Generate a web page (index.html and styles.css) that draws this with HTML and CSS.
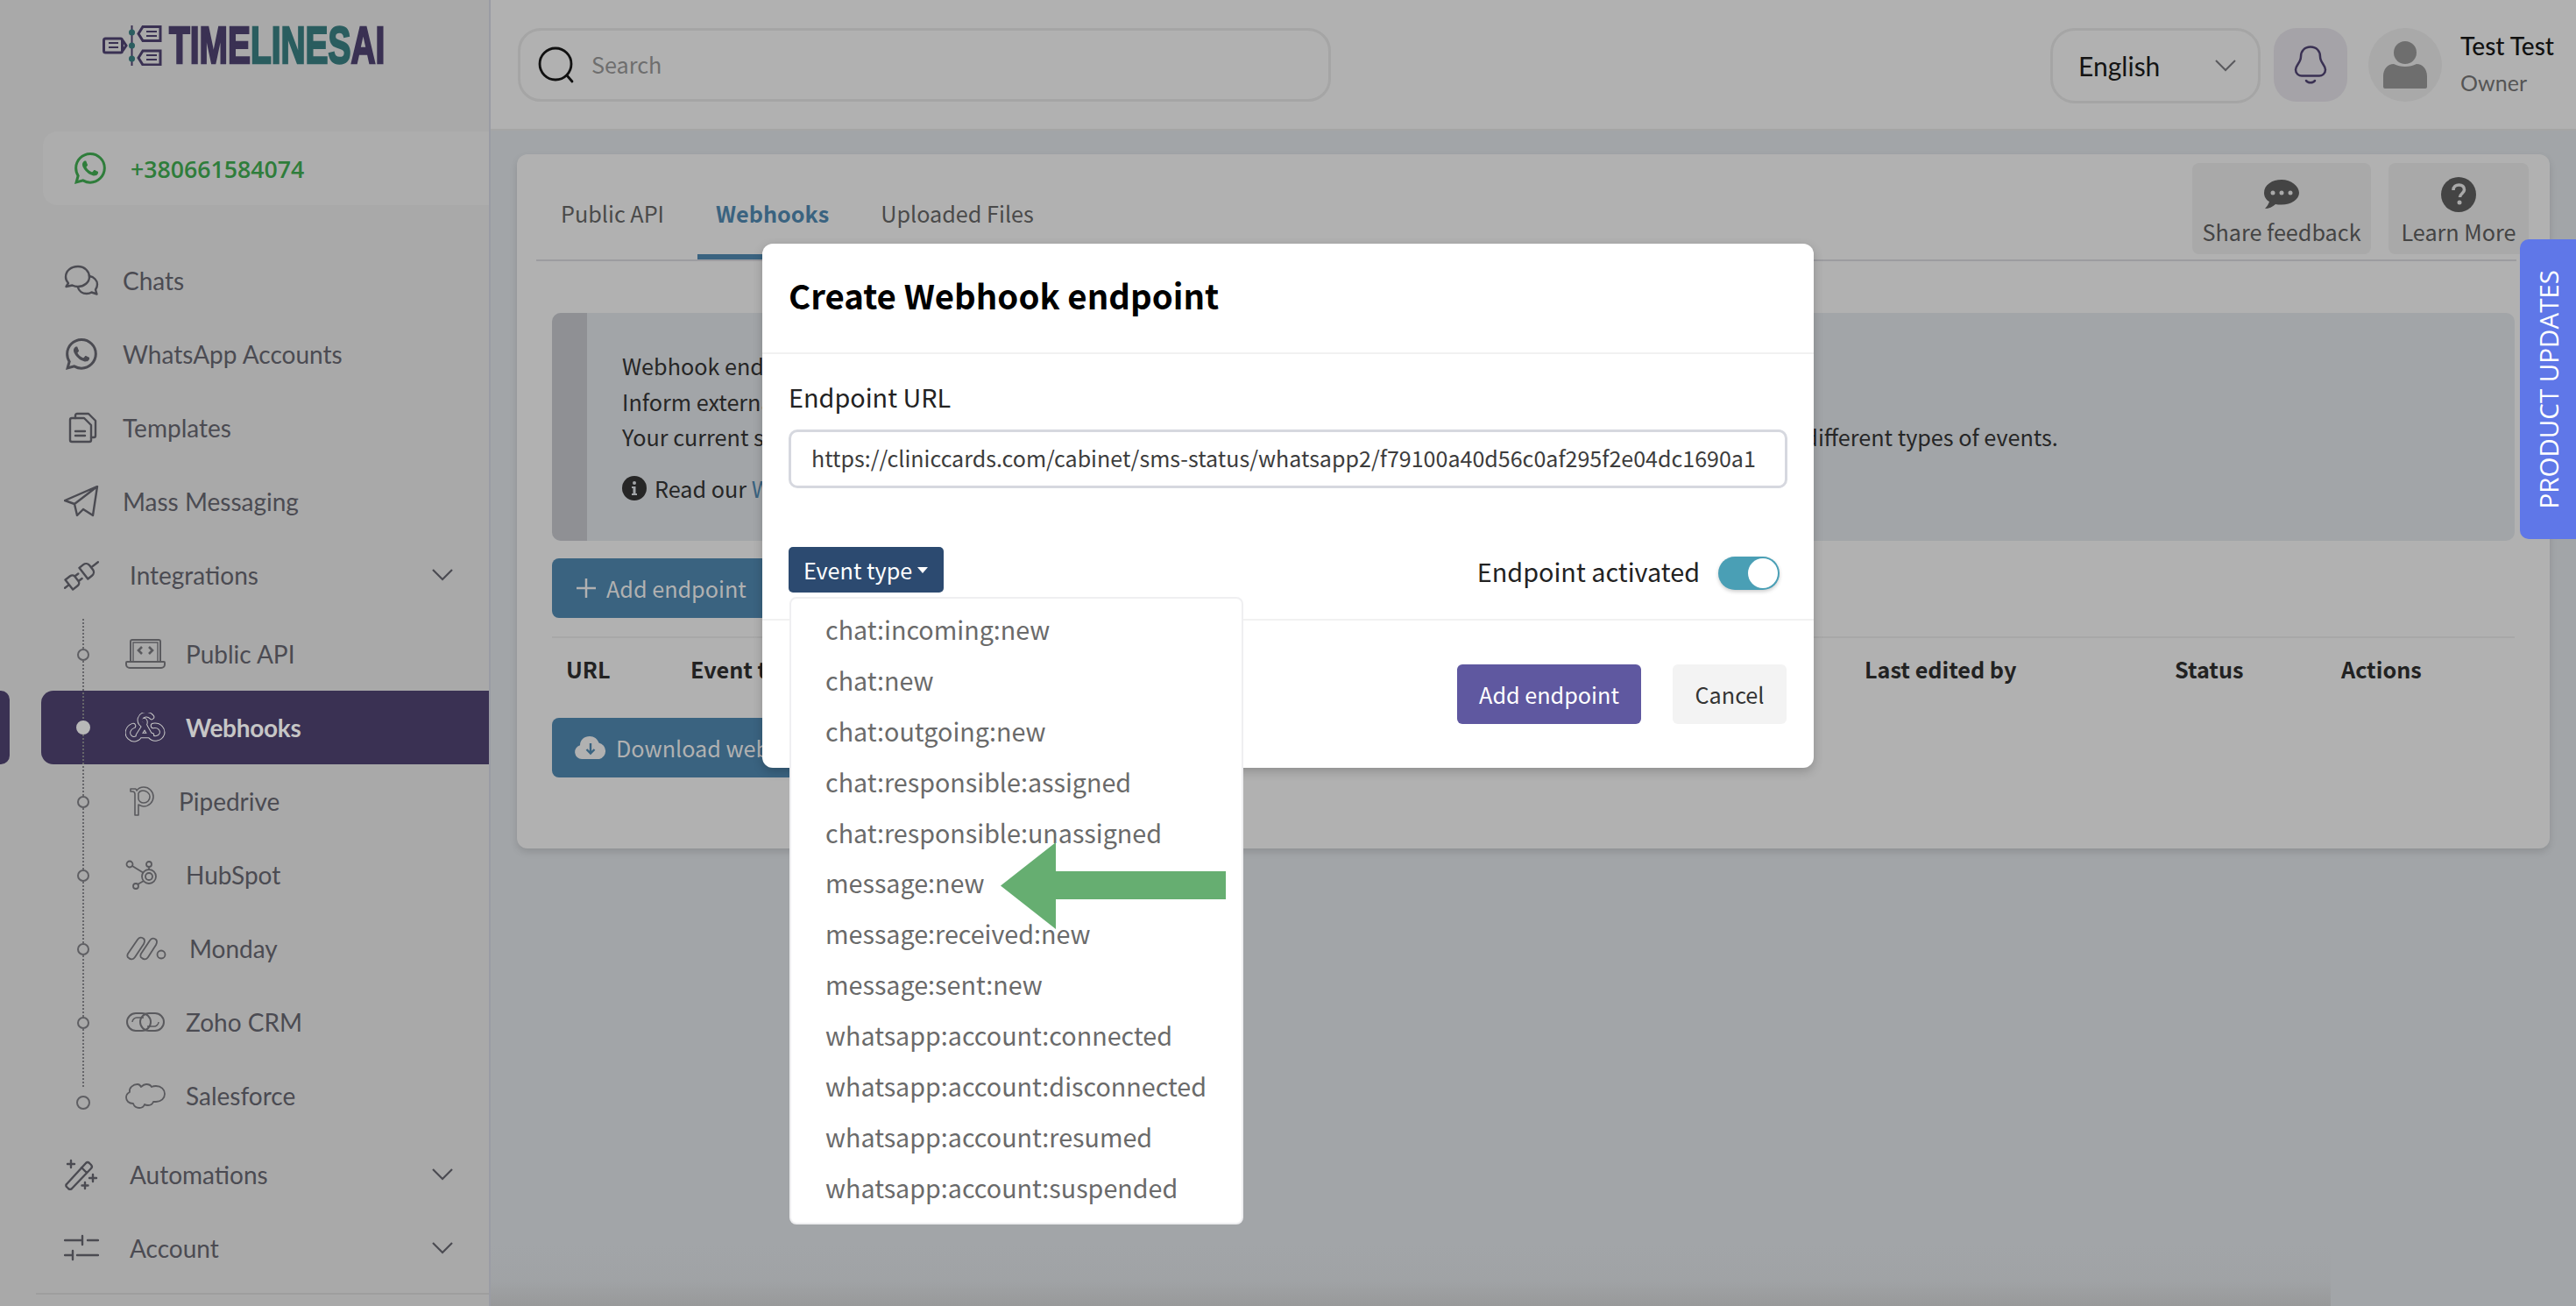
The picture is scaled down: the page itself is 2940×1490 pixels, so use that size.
FILE: index.html
```html
<!DOCTYPE html>
<html lang="en">
<head>
<meta charset="utf-8">
<title>Webhooks</title>
<link rel="stylesheet" href="styles.css">
</head>
<body>
<div class="app">
  <aside class="sidebar">
    <div class="logo">
      <svg class="logo-mark" viewBox="0 0 68 46" width="68" height="46" fill="none">
        <rect x="1.5" y="15" width="21" height="16" rx="2" stroke="#3a3153" stroke-width="3"/>
        <path d="M23 17l4 6-4 6" stroke="#3a3153" stroke-width="3"/>
        <path d="M7 20h11M7 25h11" stroke="#3a3153" stroke-width="2"/>
        <path d="M33.500 0v46" stroke="#3a3153" stroke-width="2"/>
        <circle cx="33.500" cy="8" r="3.500" fill="#2a5d5f"/><circle cx="33.500" cy="23" r="3.500" fill="#2a5d5f"/><circle cx="33.500" cy="38" r="3.500" fill="#2a5d5f"/>
        <path d="M46 1.500h20v16H46l-5-8z" stroke="#3a3153" stroke-width="3"/>
        <path d="M50 7h12M50 12h12" stroke="#3a3153" stroke-width="2"/>
        <path d="M46 29h20v16H46l-5-8z" stroke="#3a3153" stroke-width="3"/>
        <path d="M50 34h12M50 39h12" stroke="#3a3153" stroke-width="2"/>
      </svg>
      <span class="logo-text"><span>TIME</span><span class="logo-teal">LINES</span><span>AI</span></span>
    </div>
    <div class="phone">
      <svg class="wa" viewBox="0 0 16 16" width="36" height="36"><path fill="#2f7d3b" d="M13.601 2.326A7.854 7.854 0 0 0 7.994 0C3.627 0 .068 3.558.064 7.926c0 1.399.366 2.76 1.057 3.965L0 16l4.204-1.102a7.933 7.933 0 0 0 3.79.965h.004c4.368 0 7.926-3.558 7.93-7.93A7.898 7.898 0 0 0 13.6 2.326zM7.994 14.521a6.573 6.573 0 0 1-3.356-.92l-.24-.144-2.494.654.666-2.433-.156-.251a6.56 6.56 0 0 1-1.007-3.505c0-3.626 2.957-6.584 6.591-6.584a6.56 6.56 0 0 1 4.66 1.931 6.557 6.557 0 0 1 1.928 4.66c-.004 3.639-2.961 6.592-6.592 6.592zm3.615-4.934c-.197-.099-1.17-.578-1.353-.646-.182-.065-.315-.099-.445.099-.133.197-.513.646-.627.775-.114.133-.232.148-.43.05-.197-.1-.836-.308-1.592-.985-.59-.525-.985-1.175-1.103-1.372-.114-.198-.011-.304.088-.403.087-.088.197-.232.296-.346.1-.114.133-.198.198-.33.065-.134.034-.248-.015-.347-.05-.099-.445-1.076-.612-1.47-.16-.389-.323-.335-.445-.34-.114-.007-.247-.007-.38-.007a.729.729 0 0 0-.529.247c-.182.198-.691.677-.691 1.654 0 .977.71 1.916.81 2.049.098.133 1.394 2.132 3.383 2.992.47.205.84.326 1.129.418.475.152.904.129 1.246.08.38-.058 1.171-.48 1.338-.943.164-.464.164-.86.114-.943-.049-.084-.182-.133-.38-.232z"/></svg>
      <span>+380661584074</span>
    </div>
    <nav class="nav">
      <a class="item">
        <svg class="ico" viewBox="0 0 40 36" fill="none" stroke="#4b4b52" stroke-width="2.400" stroke-linejoin="round" stroke-linecap="round"><path d="M16 2C8 2 2 7 2 14c0 3 1 5 3 7l-2.500 4 7-1.500c2 1 4 1.500 6.500 1.500 7 0 13-5 13-11S24 2 16 2z"/><path d="M29 13c5 1 9 4.500 9 9.500 0 2.500-1 4.500-2 6l1.500 5-6-2c-1.500 1-3.500 1.500-5.500 1.500-5 0-9-3-10-7"/></svg>
        <span>Chats</span>
      </a>
      <a class="item">
        <svg class="ico" viewBox="0 0 16 16"><path fill="#4b4b52" d="M13.601 2.326A7.854 7.854 0 0 0 7.994 0C3.627 0 .068 3.558.064 7.926c0 1.399.366 2.76 1.057 3.965L0 16l4.204-1.102a7.933 7.933 0 0 0 3.79.965h.004c4.368 0 7.926-3.558 7.93-7.93A7.898 7.898 0 0 0 13.6 2.326zM7.994 14.521a6.573 6.573 0 0 1-3.356-.92l-.24-.144-2.494.654.666-2.433-.156-.251a6.56 6.56 0 0 1-1.007-3.505c0-3.626 2.957-6.584 6.591-6.584a6.56 6.56 0 0 1 4.66 1.931 6.557 6.557 0 0 1 1.928 4.66c-.004 3.639-2.961 6.592-6.592 6.592zm3.615-4.934c-.197-.099-1.17-.578-1.353-.646-.182-.065-.315-.099-.445.099-.133.197-.513.646-.627.775-.114.133-.232.148-.43.05-.197-.1-.836-.308-1.592-.985-.59-.525-.985-1.175-1.103-1.372-.114-.198-.011-.304.088-.403.087-.088.197-.232.296-.346.1-.114.133-.198.198-.33.065-.134.034-.248-.015-.347-.05-.099-.445-1.076-.612-1.47-.16-.389-.323-.335-.445-.34-.114-.007-.247-.007-.38-.007a.729.729 0 0 0-.529.247c-.182.198-.691.677-.691 1.654 0 .977.71 1.916.81 2.049.098.133 1.394 2.132 3.383 2.992.47.205.84.326 1.129.418.475.152.904.129 1.246.08.38-.058 1.171-.48 1.338-.943.164-.464.164-.86.114-.943-.049-.084-.182-.133-.38-.232z"/></svg>
        <span>WhatsApp Accounts</span>
      </a>
      <a class="item">
        <svg class="ico" viewBox="0 0 40 36" fill="none" stroke="#4b4b52" stroke-width="2.400" stroke-linejoin="round" stroke-linecap="round"><path d="M9 7h14l8 8v17a2 2 0 0 1-2 2H9a2 2 0 0 1-2-2V9a2 2 0 0 1 2-2z"/><path d="M13 7V4a2 2 0 0 1 2-2h13l8 8v17a2 2 0 0 1-2 2h-3"/><path d="M13 22h11M13 27h11"/></svg>
        <span>Templates</span>
      </a>
      <a class="item">
        <svg class="ico" viewBox="0 0 40 36" fill="none" stroke="#4b4b52" stroke-width="2.400" stroke-linejoin="round" stroke-linecap="round"><path d="M1 17L38 1l-5 33-11-7-7 7-3-13zM38 1L12 21M15 34l7-7"/></svg>
        <span>Mass Messaging</span>
      </a>
      <a class="item item-group">
        <svg class="ico" viewBox="0 0 40 36" fill="none" stroke="#4b4b52" stroke-width="2.400" stroke-linejoin="round" stroke-linecap="round"><g transform="translate(20 18) rotate(-38)"><path d="M-24 0h6M-18-7h7a4 4 0 0 1 4 4v6a4 4 0 0 1-4 4h-7zM-7-3.500h5M-7 3.500h5M3-8v16M3-8h6a5 5 0 0 1 5 5v6a5 5 0 0 1-5 5H3M14 0h10"/></g></svg>
        <span class="group-label">Integrations</span>
        <svg class="chev" viewBox="0 0 24 14" fill="none" stroke="#4b4b52" stroke-width="2.200"><path d="M1 1l11 11L23 1"/></svg>
      </a>
      <div class="subnav">
        <a class="sub"><i class="dot"></i>
          <svg class="sub-ico" viewBox="0 0 46 34" fill="none" stroke="#5a5a5e" stroke-width="2"><path d="M6 26V3a2 2 0 0 1 2-2h30a2 2 0 0 1 2 2v23"/><path d="M9 26V4h28v22" stroke-width="1.400"/><path d="M2 26h42a1 1 0 0 1 1 1v2a4 4 0 0 1-4 4H5a4 4 0 0 1-4-4v-2a1 1 0 0 1 1-1z"/><path d="M19 9l-4 4 4 4M27 9l4 4-4 4" stroke-width="2.600"/></svg>
          <span>Public API</span></a>
        <a class="sub active"><i class="dot"></i>
          <svg class="sub-ico" viewBox="0 0 46 34" fill="none"><g stroke="#c6c6c6" stroke-width="6.500" stroke-linecap="round" stroke-linejoin="round"><path d="M30 5c-3-4-11-4-13 2-1 4 2 7 5 8l-7 11"/><path d="M9 15c-6 2-8 9-4 13 4 4 10 2 11-2h14"/><path d="M21 9c2 0 2 4 0 4l8 14c3 4 11 3 13-3 1-5-3-10-10-9"/></g><g stroke="#3a3153" stroke-width="4.500" stroke-linecap="round" stroke-linejoin="round"><path d="M30 5c-3-4-11-4-13 2-1 4 2 7 5 8l-7 11"/><path d="M9 15c-6 2-8 9-4 13 4 4 10 2 11-2h14"/><path d="M21 9c2 0 2 4 0 4l8 14c3 4 11 3 13-3 1-5-3-10-10-9"/></g></svg>
          <span>Webhooks</span></a>
        <a class="sub sub-pipe"><i class="dot"></i>
          <svg class="sub-ico pipe-ico" viewBox="0 0 28 34" fill="none" stroke="#5a5a5e" stroke-width="1.600" stroke-linejoin="round"><path d="M1 3h6l1 2c2-3 5-4 8-4 6 0 11 5 11 11s-5 11-11 11c-2 0-4-1-6-2v12H6V9c0-2-1-3-3-3H1z"/><path d="M10 8c1-2 3-3 5-3 4 0 8 3 8 7s-3 7-7 7c-3 0-6-2-6-5z"/></svg>
          <span>Pipedrive</span></a>
        <a class="sub"><i class="dot"></i>
          <svg class="sub-ico" viewBox="0 0 46 34" fill="none" stroke="#5a5a5e" stroke-width="1.800"><circle cx="5" cy="5" r="3.500"/><circle cx="27" cy="5" r="3"/><circle cx="27" cy="19" r="8"/><circle cx="27" cy="19" r="4"/><circle cx="12" cy="30" r="3"/><path d="M8 7l13 8M27 8v3M14 28l7-4"/></svg>
          <span>HubSpot</span></a>
        <a class="sub sub-mon"><i class="dot"></i>
          <svg class="sub-ico mon-ico" viewBox="0 0 48 28" fill="none" stroke="#5a5a5e" stroke-width="1.800"><path d="M3 20L14 4c2-3 5-3 7-1s1 4 0 6L11 24c-2 3-5 3-7 1-2-1-2-3-1-5z"/><path d="M18 20L28 5c2-3 5-3 7-1s1 4 0 6L26 24c-2 3-5 3-7 1-2-1-2-3-1-5z"/><circle cx="41" cy="21" r="4.500"/></svg>
          <span>Monday</span></a>
        <a class="sub"><i class="dot"></i>
          <svg class="sub-ico" viewBox="0 0 46 26" fill="none" stroke="#5a5a5e" stroke-width="2"><rect x="2" y="3" width="27" height="20" rx="10"/><rect x="17" y="3" width="27" height="20" rx="10"/><path d="M8 13c0-3 3-5 5-5h8M38 13c0 3-3 5-5 5h-8" stroke-width="1.500"/></svg>
          <span>Zoho CRM</span></a>
        <a class="sub sub-last"><i class="dot"></i>
          <svg class="sub-ico" viewBox="0 0 46 30" fill="none" stroke="#5a5a5e" stroke-width="1.800" stroke-linejoin="round"><path d="M18 5c2-2 4-3 6-3 3 0 5 1 6 3 2-1 3-1 5-1 6 0 10 4 10 9s-4 9-10 9h-3c-1 3-4 4-6 4-2 0-3 0-4-1-1 3-4 4-6 4-4 0-6-2-7-5-5 0-8-3-8-7 0-3 2-5 4-6-1-5 4-9 9-9 2 0 3 1 4 3z"/></svg>
          <span>Salesforce</span></a>
      </div>
      <a class="item item-group">
        <svg class="ico" viewBox="0 0 40 36" fill="none" stroke="#4b4b52" stroke-width="2.400" stroke-linejoin="round" stroke-linecap="round"><path d="M3 29L25 5a3 3 0 0 1 4 0l2 2a3 3 0 0 1 0 4L9 34a3 3 0 0 1-4 0l-2-2a2 2 0 0 1 0-3zM20 10l6 6M8 2v8M4 6h8M33 18v8M29 22h8M24 27v7M20.500 30.500h7"/></svg>
        <span class="group-label">Automations</span>
        <svg class="chev" viewBox="0 0 24 14" fill="none" stroke="#4b4b52" stroke-width="2.200"><path d="M1 1l11 11L23 1"/></svg>
      </a>
      <a class="item item-group">
        <svg class="ico" viewBox="0 0 40 36" fill="none" stroke="#4b4b52" stroke-width="2.400" stroke-linecap="round"><path d="M1 9h20M27 9h12M21 4v10M1 26h8M15 26h24M10 21v10"/></svg>
        <span class="group-label">Account</span>
        <svg class="chev" viewBox="0 0 24 14" fill="none" stroke="#4b4b52" stroke-width="2.200"><path d="M1 1l11 11L23 1"/></svg>
      </a>
    </nav>
    <div class="side-foot"></div>
    <i class="side-marker"></i>
  </aside>

  <div class="main">
    <header class="topbar">
      <div class="search">
        <svg viewBox="0 0 42 42" width="42" height="42" fill="none" stroke="#111" stroke-width="2.800" stroke-linecap="round"><circle cx="20" cy="20" r="18"/><path d="M33 33l6 7"/></svg>
        <span>Search</span>
      </div>
      <div class="top-right">
        <div class="lang"><span>English</span><svg viewBox="0 0 24 14" width="24" height="14" fill="none" stroke="#5a5a5e" stroke-width="2"><path d="M1 1l11 11L23 1"/></svg></div>
        <div class="bell">
          <svg viewBox="0 0 38 44" width="38" height="44" fill="none" stroke="#3a3153" stroke-width="2.500" stroke-linecap="round" stroke-linejoin="round"><path d="M19 1.500c-7 0-11 5-11 11 0 7-6 10-6 15 0 5 4 7 7 7h20c3 0 7-2 7-7 0-5-6-8-6-15 0-6-4-11-11-11z"/><path d="M14 40c2 3 8 3 10 0"/></svg>
        </div>
        <div class="avatar">
          <svg viewBox="0 0 50 54" width="50" height="54" fill="#6e6e6e"><circle cx="25" cy="13" r="13"/><path d="M2 54a2 2 0 0 1-2-2V40c0-8 5-14 12-14 4 2 8 3 13 3s9-1 13-3c7 0 12 6 12 14v12a2 2 0 0 1-2 2z"/></svg>
        </div>
        <div class="user"><strong>Test Test</strong><span>Owner</span></div>
      </div>
    </header>

    <section class="content">
      <div class="card">
        <div class="tabs-bar">
          <div class="tabs">
            <a class="tab">Public API</a>
            <a class="tab tab-active">Webhooks</a>
            <a class="tab">Uploaded Files</a>
          </div>
          <div class="tab-actions">
            <a class="act act-share">
              <svg viewBox="0 0 40 34" width="40" height="34"><path fill="#444" d="M20 0C9 0 0 6 0 15c0 4 2 8 6 10-1 3-3 6-5 8 4 0 9-2 12-5 2 .5 4 .5 7 .5 11 0 20-6 20-13.500S31 0 20 0z"/><circle cx="10" cy="15" r="2.500" fill="#a9a9a9"/><circle cx="20" cy="15" r="2.500" fill="#a9a9a9"/><circle cx="30" cy="15" r="2.500" fill="#a9a9a9"/></svg>
              <span>Share feedback</span>
            </a>
            <a class="act act-learn">
              <svg viewBox="0 0 40 40" width="40" height="40"><circle cx="20" cy="20" r="20" fill="#444"/><path d="M14 15c0-4 3-6 6.500-6s6 2 6 5.500c0 4-5 4.500-5 8.500" fill="none" stroke="#a9a9a9" stroke-width="3.600"/><circle cx="21" cy="29" r="2.500" fill="#a9a9a9"/></svg>
              <span>Learn More</span>
            </a>
          </div>
        </div>
        <div class="tab-rule"></div>

        <div class="info">
          <div class="info-bar"></div>
          <div class="info-text">
            <p>Webhook endpoints let your system receive real-time notifications.</p>
            <p>Inform external services about what is happening in your workspace.</p>
            <p>Your current subscription plan allows you to create 10 webhook endpoints and to subscribe each of them to several different types of events.</p>
            <p class="info-read">
              <svg viewBox="0 0 28 28" width="28" height="28"><circle cx="14" cy="14" r="14" fill="#262626"/><circle cx="14" cy="8" r="2" fill="#a2a5a8"/><path d="M11 12h4.500v8H17v2h-6v-2h1.500v-6H11z" fill="#a2a5a8"/></svg>
              <span>Read our <a class="link">Webhooks documentation</a></span>
            </p>
          </div>
        </div>

        <a class="btn-blue btn-add"><svg viewBox="0 0 24 24" width="24" height="24" fill="none" stroke="#b1b1b1" stroke-width="2.500"><path d="M12 1v22M1 12h22"/></svg><span>Add endpoint</span></a>
        <div class="table-rule"></div>
        <div class="table-head">
          <b>URL</b><b>Event type</b><b>Last edited by</b><b>Status</b><b>Actions</b>
        </div>
        <a class="btn-blue btn-download"><svg viewBox="0 0 36 26" width="36" height="26"><path fill="#b1b1b1" d="M8 26a8 8 0 0 1-2-15.700C6 4 11 0 17 0c5 0 9 3 10.500 7.500A9.500 9.500 0 0 1 28 26z"/><path d="M18 8v11M13.500 15l4.500 4.500 4.500-4.500" fill="none" stroke="#3a6380" stroke-width="2.400"/></svg><span>Download webhooks</span></a>
      </div>
    </section>
    <div class="bottom-fade"></div>
  </div>
</div>

<aside class="updates"><span>PRODUCT UPDATES</span></aside>

<div class="modal">
  <div class="modal-head"><h2>Create Webhook endpoint</h2></div>
  <div class="modal-body">
    <label class="field-label">Endpoint URL</label>
    <div class="url-input">https://cliniccards.com/cabinet/sms-status/whatsapp2/f79100a40d56c0af295f2e04dc1690a1</div>
    <div class="event-row">
      <div class="event-wrap">
        <button class="event-btn">Event type<i class="caret"></i></button>
        <ul class="dropdown">
          <li>chat:incoming:new</li>
          <li>chat:new</li>
          <li>chat:outgoing:new</li>
          <li>chat:responsible:assigned</li>
          <li>chat:responsible:unassigned</li>
          <li>message:new</li>
          <li>message:received:new</li>
          <li>message:sent:new</li>
          <li>whatsapp:account:connected</li>
          <li>whatsapp:account:disconnected</li>
          <li>whatsapp:account:resumed</li>
          <li>whatsapp:account:suspended</li>
        </ul>
      </div>
      <div class="activate"><span>Endpoint activated</span><i class="toggle"><i class="knob"></i></i></div>
    </div>
  </div>
  <div class="modal-foot">
    <button class="btn-primary">Add endpoint</button>
    <button class="btn-cancel">Cancel</button>
  </div>
</div>

<svg class="arrow" viewBox="0 0 257 99" width="257" height="99"><path fill="#66ae71" d="M0 49.500L63 0v33h194v32H63v34z"/></svg>
</body>
</html>
```

FILE: styles.css
```css
* { box-sizing: border-box; }
html, body { margin: 0; padding: 0; width: 2940px; height: 1490px; overflow: hidden; }
body { position: relative; background: #a2a5a8; font-family: "Noto Sans CJK SC", "Noto Sans", sans-serif; color: #262626; }
p, h2, ul { margin: 0; padding: 0; }
a { color: inherit; text-decoration: none; }
button { font-family: inherit; border: 0; padding: 0; }
i { font-style: normal; display: block; }

.app { display: flex; width: 2940px; height: 1490px; }

/* Sidebar */
.sidebar { position: relative; width: 560px; flex: none; height: 1490px; background: #a9a9a9; border-right: 2px solid #9a9ca4; font-family: Lato, "Noto Sans", sans-serif; color: #4b4b52; }
.logo { display: flex; align-items: center; height: 46px; margin: 29px 0 0 117px; gap: 8px; }
.logo-mark { flex: none; }
.logo-text { display: inline-block; font-family: "Liberation Sans", sans-serif; font-weight: 700; font-size: 60px; line-height: 46px; color: #3a3153; -webkit-text-stroke: 2.500px currentColor; transform: scaleX(.648); transform-origin: left center; white-space: nowrap; }
.logo-teal { color: #2a5d5f; }
.phone { display: flex; align-items: center; height: 84px; margin: 75px 0 0 49px; padding-left: 36px; gap: 28px; border-radius: 16px 0 0 16px; font-family: "Open Sans", sans-serif; font-size: 26.700px; font-weight: 600; color: #2f7d3b; background: #adadad; }
.wa { flex: none; }
.nav { display: flex; flex-direction: column; margin-top: 44px; }
.item { display: flex; align-items: center; height: 84px; padding-left: 73px; font-size: 28px; white-space: nowrap; }
.ico { width: 40px; height: 36px; flex: none; margin-right: 27px; }
.item-group .group-label { margin-left: 8px; }
.chev { width: 24px; height: 14px; margin-left: auto; margin-right: 41px; }
.subnav { position: relative; display: flex; flex-direction: column; margin: 6px 0 6px; height: 588px; }
.subnav::before { content: ""; position: absolute; z-index: 1; left: 94px; top: 2px; height: 534px; border-left: 2px dotted #66666a; }
.sub { position: relative; display: flex; align-items: center; height: 84px; margin-left: 47px; padding-left: 96px; font-size: 28px; white-space: nowrap; }
.sub-ico { width: 46px; height: 34px; flex: none; margin-right: 23px; }
.pipe-ico { width: 28px; margin: 0 28px 0 5px; }
.mon-ico { width: 48px; margin-right: 25px; }
.dot { position: absolute; z-index: 2; left: 41px; top: 50%; margin-top: -6px; width: 14px; height: 14px; border: 2px solid #5f5f63; border-radius: 50%; background: #a9a9a9; }
.sub.active .dot { left: 40px; margin-top: -8px; width: 16px; height: 16px; background: #b8b8b8; border-color: #b8b8b8; }
.sub.active { background: #3a3153; color: #c6c6c6; border-radius: 14px 0 0 14px; font-weight: 700; letter-spacing: -.3px; }
.sub-last .dot { margin-top: 0; width: 16px; height: 16px; left: 40px; }
.side-foot { height: 2px; background: #9e9e9e; position: absolute; left: 41px; right: 0; top: 1475px; }
.side-marker { position: absolute; left: 0; top: 788px; width: 11px; height: 84px; background: #3a3153; border-radius: 0 10px 10px 0; }

/* Main */
.main { position: relative; flex: 1; min-width: 0; display: flex; flex-direction: column; }
.topbar { height: 149px; flex: none; background: #b1b1b1; border-bottom: 2px solid #a5a5a5; display: flex; align-items: flex-start; padding: 32px 0 0 31px; }
.search { width: 928px; height: 84px; border: 3px solid #a5a5a5; border-radius: 26px; display: flex; align-items: center; padding: 0 0 3px 20px; gap: 19px; font-size: 25.200px; line-height: 40px; color: #6e6e6e; }
.search svg { margin-top: 3px; }
.top-right { display: flex; margin-left: auto; }
.lang { width: 240px; height: 86px; border: 3px solid #a5a5a5; border-radius: 28px; display: flex; align-items: center; justify-content: space-between; padding: 0 25px 0 29px; font-family: Lato, sans-serif; font-size: 30px; color: #141414; }
.bell { width: 84px; height: 84px; margin-left: 15px; border-radius: 26px; background: #a5a3a8; display: flex; align-items: center; justify-content: center; }
.avatar { width: 84px; height: 84px; margin-left: 24px; border-radius: 50%; background: #a9a9a9; display: flex; align-items: center; justify-content: center; }
.user { display: flex; flex-direction: column; margin: 0 25px 0 21px; font-family: Lato, sans-serif; white-space: nowrap; }
.user strong { font-weight: 500; font-size: 28px; line-height: 40px; color: #111; }
.user span { font-size: 25px; line-height: 44px; color: #555; }

.content { flex: 1; padding: 27px 30px 0; }
.card { height: 792px; background: #b1b1b1; border-radius: 12px; box-shadow: 0 4px 8px rgba(0,0,0,.12); overflow: hidden; }
.tabs-bar { display: flex; justify-content: space-between; height: 120px; padding: 10px 24px 0 29px; }
.tabs { display: flex; gap: 17px; }
.tab { height: 110px; padding: 10px 21px 0; display: flex; align-items: center; border-bottom: 6px solid transparent; font-size: 25.200px; line-height: 40px; color: #4a4a4a; white-space: nowrap; }
.tab-active { color: #3a6380; font-weight: 600; border-bottom-color: #3a6380; }
.tab-actions { display: flex; gap: 20px; }
.act { height: 104px; background: #a9a9a9; border-radius: 8px; display: flex; flex-direction: column; align-items: center; padding-top: 16px; color: #444; font-size: 25.200px; line-height: 40px; white-space: nowrap; }
.act svg { flex: none; height: 40px; }
.act span { margin-top: 2px; }
.act-share { width: 204px; }
.act-learn { width: 160px; }
.tab-rule { height: 2px; background: #9c9ca0; margin: 0 38px 0 22px; }

.info { display: flex; height: 260px; margin: 59px 40px 0; background: #a2a5a8; border-radius: 10px; overflow: hidden; }
.info-bar { width: 40px; flex: none; background: #8f9094; }
.info-text { padding: 40px 0 0 40px; font-size: 25.200px; line-height: 40.500px; color: #262626; white-space: nowrap; }
.info-read { display: flex; align-items: center; gap: 9px; margin-top: 18px; }
.link { color: #3a6380; }

.btn-blue { display: flex; align-items: center; height: 68px; margin-left: 40px; background: #3a6380; border-radius: 8px; color: #b1b1b1; font-size: 25.200px; line-height: 40px; white-space: nowrap; }
.btn-blue svg { flex: none; }
.btn-add { width: 248px; margin-top: 20px; padding-left: 27px; gap: 11px; }
.btn-download { width: 340px; padding-left: 26px; gap: 11px; }
.table-rule { height: 2px; background: #a8a8a8; margin: 21px 40px 0; }
.table-head { display: grid; grid-template-columns: 142px 1340px 354px 190px 1fr; height: 91px; margin: 0 40px; padding: 15px 0 0 16px; font-size: 25.200px; line-height: 40px; color: #222; white-space: nowrap; }
.bottom-fade { position: absolute; left: 0; bottom: 0; width: 2100px; height: 70px; background: linear-gradient(rgba(152,153,154,0), rgba(152,153,154,.2) 60%, #98999a); pointer-events: none; }

/* Product updates */
.updates { position: absolute; right: 0; top: 273px; width: 64px; height: 342px; background: #5f77e8; border-radius: 10px 0 0 10px; display: flex; align-items: center; justify-content: center; }
.updates span { writing-mode: vertical-rl; transform: rotate(180deg); font-family: "Open Sans", sans-serif; font-size: 29.500px; font-weight: 500; line-height: 40px; color: #fff; white-space: nowrap; margin-left: 2px; }

/* Modal */
.modal { position: absolute; left: 870px; top: 278px; width: 1200px; height: 598px; background: #fff; border-radius: 12px; box-shadow: 0 4px 12px rgba(0,0,0,.2); display: flex; flex-direction: column; }
.modal-head { height: 126px; flex: none; padding: 33px 30px 0; border-bottom: 2px solid #f1f1f1; }
.modal-head h2 { font-size: 38.400px; line-height: 50px; font-weight: 600; color: #000; }
.modal-body { height: 302px; flex: none; padding: 29px 30px 0; }
.field-label { display: block; font-size: 28.800px; line-height: 40px; color: #222; }
.url-input { height: 67px; margin-top: 17px; border: 3px solid #d6d8df; border-radius: 10px; padding: 0 23px 3px; display: flex; align-items: center; font-size: 25.050px; line-height: 40px; color: #3c3c3c; white-space: nowrap; }
.event-row { display: flex; justify-content: space-between; align-items: flex-start; margin-top: 67px; }
.event-wrap { position: relative; }
.event-btn { display: flex; align-items: center; height: 52px; width: 177px; padding-left: 17px; background: #2c4a70; border-radius: 5px; color: #fff; font-size: 25.200px; line-height: 40px; }
.caret { width: 0; height: 0; margin-left: 6px; border: 6px solid transparent; border-top: 7px solid #fff; border-bottom: 0; }
.dropdown { position: absolute; left: 1px; top: 57px; width: 518px; height: 716px; padding-top: 6px; list-style: none; background: #fff; border: 2px solid #efeff1; border-radius: 8px; }
.dropdown li { height: 57.900px; display: flex; align-items: center; padding-left: 39px; font-size: 28.700px; line-height: 40px; color: #6a6a6a; white-space: nowrap; }
.activate { display: flex; align-items: center; gap: 21px; margin: 8px 9px 0 0; font-size: 28.800px; line-height: 40px; color: #222; }
.activate span { padding-bottom: 3px; }
.toggle { position: relative; width: 70px; height: 38px; border-radius: 19px; background: #4a9fb5; box-shadow: 0 2px 4px rgba(0,0,0,.2); }
.knob { position: absolute; right: 2px; top: 2px; width: 34px; height: 34px; border-radius: 50%; background: #fff; }
.modal-foot { flex: 1; border-top: 2px solid #f1f1f1; display: flex; justify-content: flex-end; gap: 36px; padding: 50px 31px 0 0; }
.btn-primary { width: 210px; height: 68px; border-radius: 6px; background: #5f58a0; color: #fff; font-size: 25.200px; line-height: 40px; }
.btn-cancel { width: 130px; height: 68px; border-radius: 6px; background: #f3f3f3; color: #333; font-size: 25.200px; line-height: 40px; }

.arrow { position: absolute; left: 1142px; top: 961px; }
```
